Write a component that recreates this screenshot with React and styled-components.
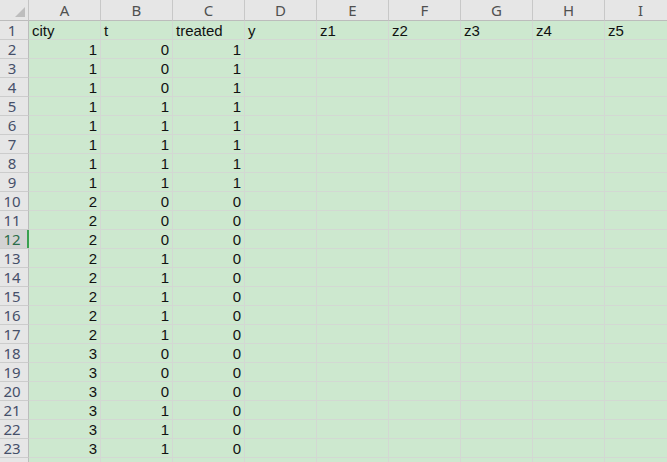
import * as React from "react"
import styled, { createGlobalStyle } from "styled-components"

const columns = ["A", "B", "C", "D", "E", "F", "G", "H", "I"]

const header = ["city", "t", "treated", "y", "z1", "z2", "z3", "z4", "z5"]

const cityCol = [1, 1, 1, 1, 1, 1, 1, 1, 2, 2, 2, 2, 2, 2, 2, 2, 3, 3, 3, 3, 3, 3]
const tCol = [0, 0, 0, 1, 1, 1, 1, 1, 0, 0, 0, 1, 1, 1, 1, 1, 0, 0, 0, 1, 1, 1]
const treatedCol = [1, 1, 1, 1, 1, 1, 1, 1, 0, 0, 0, 0, 0, 0, 0, 0, 0, 0, 0, 0, 0, 0]

const rows = [header, ...cityCol.map((c, i) => [c, tCol[i], treatedCol[i]])]

const ACTIVE_ROW = 12

const Sheet = () => (
  <>
    <GlobalStyle />
    <Grid>
      <Corner>
        <CornerMark />
      </Corner>
      {columns.map(col => (
        <ColHeader key={col}>{col}</ColHeader>
      ))}
      {rows.map((row, r) => (
        <React.Fragment key={r}>
          <RowHeader $active={r + 1 === ACTIVE_ROW}>{r + 1}</RowHeader>
          {columns.map((col, c) => {
            const value = row[c]
            return (
              <Cell key={col} $num={typeof value === "number"}>
                {value}
              </Cell>
            )
          })}
        </React.Fragment>
      ))}
      {/* row 24 only peeks in at the bottom edge */}
      <RowHeader />
      {columns.map(col => (
        <Cell key={col} />
      ))}
    </Grid>
  </>
)

const GlobalStyle = createGlobalStyle`
  html, body {
    margin: 0;
    padding: 0;
    overflow: hidden;
    background: #ffffff;
  }
`

const Grid = styled.div`
  display: grid;
  grid-template-columns: 29px repeat(9, 72px);
  grid-template-rows: 21px;
  grid-auto-rows: 19px;
  width: 677px;
  height: 462px;
  overflow: hidden;
`

const Corner = styled.div`
  position: relative;
  background: #e6e6e6;
  border-right: 1px solid #c4c4c4;
  border-bottom: 1px solid #bcbcbc;
`

const CornerMark = styled.div`
  position: absolute;
  right: 3px;
  bottom: 3px;
  width: 0;
  height: 0;
  border-left: 10px solid transparent;
  border-bottom: 10px solid #bdbdbd;
`

const ColHeader = styled.div`
  background: #e6e6e6;
  border-right: 1px solid #c8c8c8;
  border-bottom: 1px solid #bcbcbc;
  font-family: "Noto Sans", "Liberation Sans", sans-serif;
  font-size: 15px;
  color: #505050;
  text-align: center;
  line-height: 20px;
`

const RowHeader = styled.div`
  position: relative;
  background: ${p => (p.$active ? "#d3d3d3" : "#e6e6e6")};
  border-right: 1px solid #bcbcbc;
  border-bottom: 1px solid #cccccc;
  font-family: "Noto Sans", "Liberation Sans", sans-serif;
  font-size: 15px;
  color: ${p => (p.$active ? "#2a6d4a" : "#46506a")};
  text-align: center;
  padding-right: 4px;
  line-height: 19px;

  &::after {
    content: "";
    display: ${p => (p.$active ? "block" : "none")};
    position: absolute;
    right: -1px;
    top: 0;
    bottom: 0;
    width: 2px;
    background: #3aa04f;
  }
`

const Cell = styled.div`
  background: #cde8cf;
  border-right: 1px solid #d3d8d3;
  border-bottom: 1px solid #d3d8d3;
  font-family: "Liberation Sans", Arial, sans-serif;
  font-size: 15px;
  color: #111;
  line-height: 18px;
  padding: 1px 3px 0 3px;
  text-align: ${p => (p.$num ? "right" : "left")};
  white-space: nowrap;
`

export default Sheet
